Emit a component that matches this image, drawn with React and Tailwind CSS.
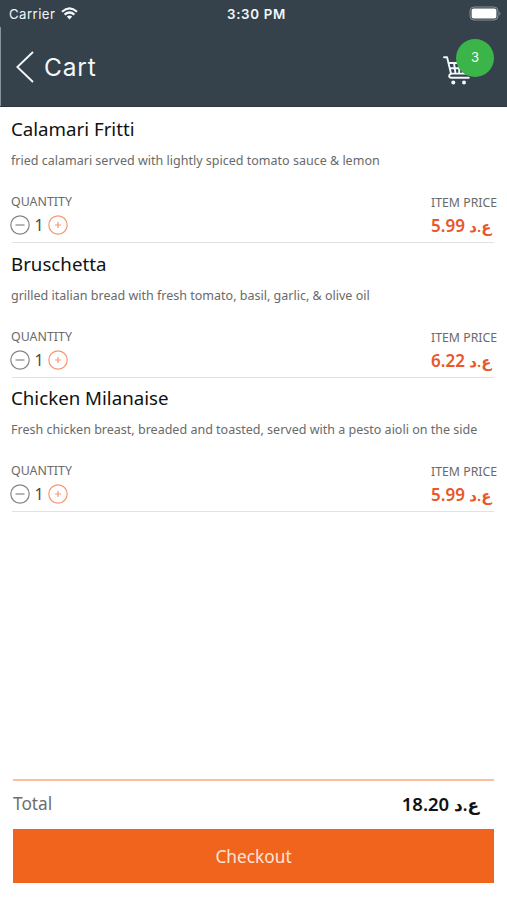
const items = [
  { name: "Calamari Fritti", info: "fried calamari served with lightly spiced tomato sauce & lemon", amount: "5.99", size: "h-[136px]" },
  { name: "Bruschetta", info: "grilled italian bread with fresh tomato, basil, garlic, & olive oil", amount: "6.22", size: "h-[135px]" },
  { name: "Chicken Milanaise", info: "Fresh chicken breast, breaded and toasted, served with a pesto aioli on the side", amount: "5.99", size: "h-[134px]" },
];

function Stepper() {
  return (
    <div className="-ml-px flex h-5 items-center">
      <svg className="h-5 w-5" viewBox="0 0 20 20" fill="none" stroke="#858585" strokeWidth="1.2">
        <circle cx="10" cy="10" r="9.2" />
        <path d="M5.5 10h9" />
      </svg>
      <span className="w-[18px] text-center text-[16px] leading-5 text-[#4c4c4c]">1</span>
      <svg className="h-5 w-5" viewBox="0 0 20 20" fill="none" stroke="#f59873" strokeWidth="1.2">
        <circle cx="10" cy="10" r="9.2" />
        <path d="M7 10h6M10 7v6" />
      </svg>
    </div>
  );
}

function Item({ item }) {
  return (
    <li className={`${item.size} flex shrink-0 flex-col justify-end`}>
      <h2 className="ml-[11px] text-[18.7px] leading-6 text-[#111]">{item.name}</h2>
      <p className="mt-[12px] ml-[11px] text-[12.53px] leading-4 whitespace-nowrap text-[#6a6a6a]">{item.info}</p>
      <div className="mt-[25px] mr-[10px] ml-[11px] flex h-[42px] justify-between">
        <div>
          <div className="text-[12.4px] leading-4 text-[#6a6a6a]">QUANTITY</div>
          <div className="mt-[5px]"><Stepper /></div>
        </div>
        <div className="w-[66px] pt-px">
          <div className="text-[12.3px] leading-4 whitespace-nowrap text-[#6a6a6a]">ITEM PRICE</div>
          <div className="mt-[4px] text-[17px] leading-[22px] font-semibold whitespace-nowrap text-[#e9572c]">{item.amount} <span className="text-[15px]">ع.د</span></div>
        </div>
      </div>
      <div className="mt-[6px] mr-[13px] ml-[12px] h-px bg-[#e2e2e2]" />
    </li>
  );
}

export default function App() {
  return (
    <main className="flex h-[900px] w-[507px] flex-col overflow-hidden bg-white font-['Noto_Sans','DejaVu_Sans',sans-serif]">
      <header className="h-[107px] shrink-0 border-b border-[#293740] bg-[#35424b] font-['Inter',sans-serif] text-[#f2f8fa]">
        <div className="flex h-[27px] items-center justify-between pr-[5px] pl-[9px]">
          <div className="flex w-[202px] items-center gap-[6px]">
            <span className="text-[13.2px] leading-5 tracking-[0.45px]">Carrier</span>
            <svg className="h-[13px] w-[17px]" viewBox="0 0 17 13" fill="none" stroke="currentColor" strokeWidth="2.2">
              <path d="M1 4.7Q8.5-2 16 4.7M3.6 7.6Q8.5 3.4 13.4 7.6" />
              <path d="M5.8 9.6Q8.5 7.4 11.2 9.6L8.5 12.5Z" fill="currentColor" stroke="none" />
            </svg>
          </div>
          <span className="text-[13.3px] leading-5 font-semibold tracking-[0.7px] whitespace-nowrap">3:30 PM</span>
          <div className="flex w-[200px] justify-end">
            <svg className="h-[15px] w-[33px]" viewBox="0 0 33 15">
              <rect x="1" y="1" width="28" height="13" rx="4" fill="none" stroke="#87919a" />
              <rect x="2.6" y="2.6" width="24.8" height="9.8" rx="2" fill="#fff" />
              <path d="M30.4 5.2q2 2.3 0 4.6z" fill="#87919a" />
            </svg>
          </div>
        </div>
        <div className="flex h-[79px] items-center justify-between border-l border-[#88939a] pr-[13px] pl-[15px]">
          <div className="flex items-center gap-[10px]">
            <svg className="h-8 w-[18px]" viewBox="0 0 18 32" fill="none" stroke="currentColor" strokeWidth="1.9">
              <path d="M17 1 1.3 16 17 31" />
            </svg>
            <h1 className="text-[24.5px] leading-8 tracking-[0.8px]">Cart</h1>
          </div>
          <div className="relative -top-[5px] h-[46px] w-[51px]">
            <svg className="absolute top-[17px] left-0 h-[29px] w-[29px]" viewBox="0 0 29 29" fill="none" stroke="currentColor" strokeWidth="1.9" strokeLinejoin="round" strokeLinecap="round">
              <path d="M1 1.2h3.1L8 17.6h15.5L27 7H5.6M6.7 12.2h18.5M11 7l1.5 10.6M16.2 7v10.6M21.5 7 20 17.6" />
              <path d="M8 17.6c-2.7 1.2-2.4 4.1.3 4.1h17.5" />
              <circle cx="10.3" cy="26.4" r="2" fill="currentColor" stroke="none" />
              <circle cx="21" cy="26.4" r="2" fill="currentColor" stroke="none" />
            </svg>
            <span className="absolute top-0 right-0 flex h-[38px] w-[38px] items-center justify-center rounded-full bg-[#3bb54a] text-[13px]">3</span>
          </div>
        </div>
      </header>
      <ul className="flex grow flex-col">
        {items.map((item) => <Item key={item.name} item={item} />)}
      </ul>
      <footer className="mr-[13px] mb-[17px] ml-[13px] h-[104px] shrink-0">
        <div className="h-[2px] bg-[#f9bf9f]" />
        <div className="flex h-[48px] items-center justify-between pr-[15px] pb-[2px]">
          <span className="text-[17.3px] text-[#6e6e6e]">Total</span>
          <span className="text-[18.5px] font-semibold whitespace-nowrap text-[#111]">18.20 <span className="text-[17px]">ع.د</span></span>
        </div>
        <button className="flex h-[54px] w-full items-center justify-center bg-[#f1641e] pt-px text-[17.3px] text-[#fde5d6]">Checkout</button>
      </footer>
    </main>
  );
}
